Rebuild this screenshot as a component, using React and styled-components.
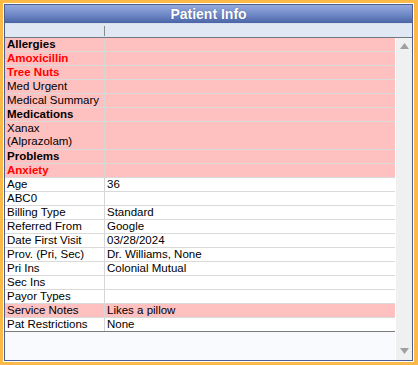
import React from 'react'
import styled, { createGlobalStyle } from 'styled-components'

const GlobalStyle = createGlobalStyle`
  html, body { margin: 0; padding: 0; background: #ffffff; }
  body { font-family: "Liberation Sans", Arial, sans-serif; }
`

const rows = [
  { label: 'Allergies', kind: 'head', alert: true },
  { label: 'Amoxicillin', kind: 'red', alert: true },
  { label: 'Tree Nuts', kind: 'red', alert: true },
  { label: 'Med Urgent', alert: true },
  { label: 'Medical Summary', alert: true },
  { label: 'Medications', kind: 'head', alert: true },
  { label: 'Xanax\n(Alprazolam)', alert: true, tall: true },
  { label: 'Problems', kind: 'head', alert: true },
  { label: 'Anxiety', kind: 'red', alert: true },
  { label: 'Age', value: '36' },
  { label: 'ABC0' },
  { label: 'Billing Type', value: 'Standard' },
  { label: 'Referred From', value: 'Google' },
  { label: 'Date First Visit', value: '03/28/2024' },
  { label: 'Prov. (Pri, Sec)', value: 'Dr. Williams, None' },
  { label: 'Pri Ins', value: 'Colonial Mutual' },
  { label: 'Sec Ins' },
  { label: 'Payor Types' },
  { label: 'Service Notes', value: 'Likes a pillow', alert: true },
  { label: 'Pat Restrictions', value: 'None' },
]

const App = () => (
  <>
    <GlobalStyle />
    <Frame>
      <Panel>
        <TitleBar>Patient Info</TitleBar>
        <ColumnHeader>
          <HeaderCell />
          <HeaderCell />
        </ColumnHeader>
        <Body>
          <Grid>
            {rows.map((r, i) => (
              <Row key={i} alert={r.alert} tall={r.tall}>
                <LabelCell kind={r.kind}>{r.label}</LabelCell>
                <ValueCell>{r.value || ''}</ValueCell>
              </Row>
            ))}
            <GridEnd />
          </Grid>
          <ScrollBar>
            <Arrow viewBox="0 0 9 6">
              <path d="M0 6 L4.5 0 L9 6 Z" fill="#a0a0a0" />
            </Arrow>
            <Arrow viewBox="0 0 9 6">
              <path d="M0 0 L9 0 L4.5 6 Z" fill="#a0a0a0" />
            </Arrow>
          </ScrollBar>
        </Body>
      </Panel>
    </Frame>
  </>
)

const Frame = styled.div`
  box-sizing: border-box;
  width: 418px;
  height: 365px;
  border: 3px solid #fbb948;
  border-right-width: 4px;
  padding: 1px;
  background: #ffffff;
`

const Panel = styled.div`
  box-sizing: border-box;
  height: 100%;
  border: 1px solid #4d5d8f;
  display: flex;
  flex-direction: column;
  background: #f8fafd;
`

const TitleBar = styled.div`
  height: 18px;
  flex: none;
  background: linear-gradient(#93a9de, #6f88c6 55%, #4b64a6);
  color: #ffffff;
  font-weight: bold;
  font-size: 14px;
  line-height: 19px;
  text-align: center;
  text-shadow: 0 0 1px #3a4d85;
`

const ColumnHeader = styled.div`
  height: 13px;
  flex: none;
  display: grid;
  grid-template-columns: 99px 1fr;
  background: #dfe8f3;
  border-bottom: 1px solid #6f7784;
  border-top: 1px solid #d8e2ee;
`

const HeaderCell = styled.div`
  & + & {
    border-left: 1px solid #8a8a8a;
    margin: 2px 0 1px;
  }
`

const Body = styled.div`
  flex: 1;
  display: flex;
  min-height: 0;
`

const Grid = styled.div`
  flex: 1;
  display: flex;
  flex-direction: column;
  border-right: 1px solid #ffffff;
`

const Row = styled.div`
  display: grid;
  grid-template-columns: 99px 1fr;
  height: ${p => (p.tall ? 27 : 13)}px;
  border-bottom: 1px solid #dadada;
  background: ${p => (p.alert ? '#ffc0c0' : '#ffffff')};
  font-size: 11.5px;
  line-height: 13px;
  color: #000000;
`

const LabelCell = styled.div`
  padding-left: 2px;
  white-space: pre;
  overflow: hidden;
  font-weight: ${p => (p.kind ? 'bold' : 'normal')};
  color: ${p => (p.kind === 'red' ? '#ff0000' : '#000000')};
`

const ValueCell = styled.div`
  padding-left: 2px;
  border-left: 1px solid #d6d6d6;
  white-space: nowrap;
`

const GridEnd = styled.div`
  border-top: 1px solid #7a7a7a;
  margin-top: -1px;
`

const ScrollBar = styled.div`
  width: 16px;
  flex: none;
  background: #f0f0f0;
  display: flex;
  flex-direction: column;
  justify-content: space-between;
  align-items: center;
  padding: 5px 0 6px;
`

const Arrow = styled.svg`
  width: 9px;
  height: 6px;
`

export default App
